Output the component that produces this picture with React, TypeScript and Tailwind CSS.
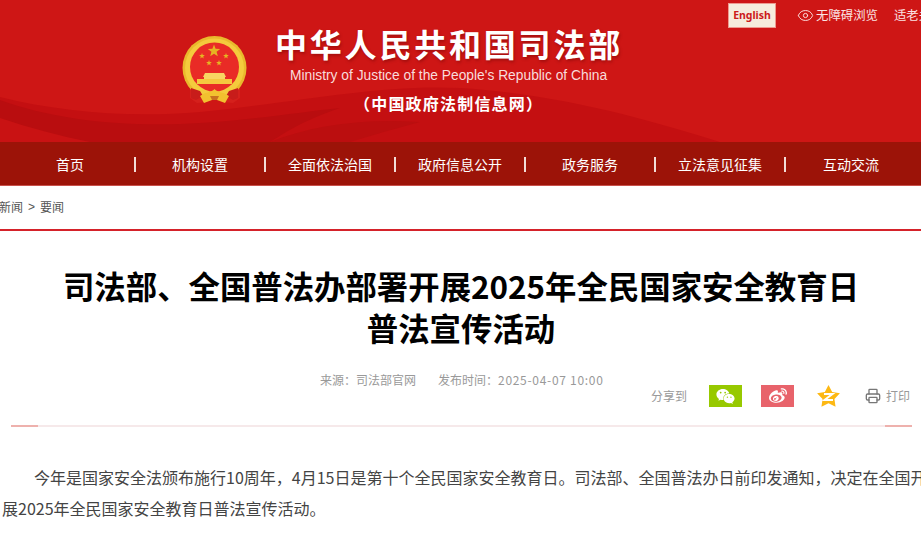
import React from "react";
import { Eye, Printer } from "lucide-react";
import { FaWeixin, FaWeibo } from "react-icons/fa";

const cjk = "font-['Noto_Sans_CJK_SC','Noto_Sans',sans-serif]";
const navItems = ["首页", "机构设置", "全面依法治国", "政府信息公开", "政务服务", "立法意见征集", "互动交流"];

function star(cx: number, cy: number, r: number, inner = 0.42) {
  const pts: string[] = [];
  for (let i = 0; i < 10; i++) {
    const rad = i % 2 === 0 ? r : r * inner;
    const a = (Math.PI / 5) * i - Math.PI / 2;
    pts.push(`${(cx + rad * Math.cos(a)).toFixed(2)},${(cy + rad * Math.sin(a)).toFixed(2)}`);
  }
  return pts.join(" ");
}

function Waves() {
  return (
    <svg className="absolute inset-0" width="921" height="142" viewBox="0 0 921 142">
      <path d="M0 97C60 112 130 118 200 112C300 102 380 84 460 88C560 94 650 120 720 142L0 142Z" fill="#c40f11" />
      <path d="M0 100C50 118 110 126 180 124C240 122 300 112 340 108C300 122 290 130 270 142L0 142Z" fill="#b90d0f" />
      <path d="M0 118C30 128 60 136 90 142L0 142Z" fill="#c91213" />
      <path d="M270 142C310 126 360 118 420 122C390 130 370 136 350 142Z" fill="#bb0e0f" />
    </svg>
  );
}

function Emblem() {
  return (
    <svg width="68" height="70" viewBox="0 0 68 70" className="shrink-0">
      <path d="M9 50L9 62L16 67L26 66L34 60L42 66L52 67L59 62L59 50Z" fill="#d5201c" />
      <circle cx="33.500" cy="32" r="32" fill="#e9b92c" />
      <circle cx="33.500" cy="32" r="29.500" fill="#f4cb3d" />
      <circle cx="33.500" cy="31" r="24.500" fill="#e92b26" />
      <polygon points={star(33, 15, 6.500)} fill="#e6b322" />
      <polygon points={star(21, 20, 3)} fill="#e6b322" />
      <polygon points={star(45, 20, 3)} fill="#e6b322" />
      <polygon points={star(28, 27, 3)} fill="#e6b322" />
      <polygon points={star(38, 27, 3)} fill="#e6b322" />
      <path d="M24 37L43 37L45 41L44 41L44 43L23 43L23 41L22 41Z" fill="#f8d662" />
      <rect x="16" y="43" width="35" height="5" fill="#f5c83f" />
      <path d="M10 52L19 55L22 60L15 64L10 62Z" fill="#c81c1a" />
      <path d="M57 52L48 55L45 60L52 64L57 62Z" fill="#c81c1a" />
      <path d="M19 60C26 55 30 57 33.500 53C37 57 41 55 48 60L44 67L36 64L31 64L23 67Z" fill="#f2c12f" />
      <path d="M29 60L38 60L36 64L31 64Z" fill="#c9701f" />
    </svg>
  );
}

function QzoneStar() {
  return (
    <svg width="23" height="22" viewBox="0 0 23 22" className="shrink-0">
      <polygon points={star(11.500, 12, 12, 0.52)} fill="#fdb813" />
      <path d="M7 9L15.500 9L7.500 15L16 15" fill="none" stroke="#fff" strokeWidth="2" />
    </svg>
  );
}

export default function App() {
  return (
    <div className={`w-[921px] h-[538px] overflow-hidden bg-white ${cjk}`}>
      <header className="relative h-[142px] bg-[#ce1615] overflow-hidden">
        <Waves />
        <div className="relative flex items-start pl-[181px]">
          <div className="mt-[36px]">
            <Emblem />
          </div>
          <div className="ml-[26px] w-[366px] shrink-0 flex flex-col items-start">
            <h1 className="mt-[20px] h-[46px] text-[32px] leading-[46px] font-bold tracking-[2.8px] text-white whitespace-nowrap [text-shadow:1px_2px_3px_rgba(90,0,0,0.35)]">
              中华人民共和国司法部
            </h1>
            <p className="mt-[1px] ml-[15px] text-[13.8px] leading-[18px] text-[#f9dcdc] font-['Liberation_Sans',sans-serif] whitespace-nowrap">
              Ministry of Justice of the People's Republic of China
            </p>
            <p className="mt-[6px] ml-[79px] text-[16px] leading-[24px] font-bold tracking-[1.2px] text-white whitespace-nowrap">
              （中国政府法制信息网）
            </p>
          </div>
          <div className="mt-[3px] ml-[87px] flex items-center shrink-0 text-[12.4px] text-[#fbe3e3] whitespace-nowrap">
            <a className="w-[48px] h-[25px] flex items-center justify-center bg-[#f6ecdc] text-[#cc1a1a] text-[10.5px] font-bold font-['Noto_Sans',sans-serif] border border-[#ee9a8f]">
              English
            </a>
            <Eye size={17} strokeWidth={1.4} className="ml-[21px] text-[#fbdcdc]" />
            <span className="ml-[2px]">无障碍浏览</span>
            <span className="ml-[16px]">适老关怀</span>
          </div>
        </div>
      </header>

      <nav className="flex h-[44px] pl-[6px] pt-[1px] bg-[#9c1308] border-b border-[#c9504a] text-[14px] text-white">
        {navItems.map((item, i) => (
          <div key={item} className="w-[130px] shrink-0 flex items-center">
            <span className="flex-1 text-center whitespace-nowrap">{item}</span>
            {i < navItems.length - 1 && <span className="w-[2px] h-[15px] bg-[#f3dcd8]" />}
          </div>
        ))}
      </nav>

      <div className="h-[41px] pb-[2px] flex items-center -ml-[1px] text-[12px] text-[#555] border-b-2 border-[#d5222a] box-content">
        <span>新闻</span>
        <span className="mx-[5px] font-['Liberation_Sans',sans-serif]">&gt;</span>
        <span>要闻</span>
      </div>

      <main>
        <h2 className="mt-[34px] ml-[1px] text-center text-[31.4px] leading-[42px] font-bold text-black">
          司法部、全国普法办部署开展2025年全民国家安全教育日
          <br />
          普法宣传活动
        </h2>
        <div className="mt-[26px] flex h-[10px] items-center pl-[320px] text-[12px] text-[#999] whitespace-nowrap">
          <span>来源：司法部官网</span>
          <span className="ml-[22px]">发布时间：</span>
          <span className="tracking-[0.7px]">2025-04-07 10:00</span>
        </div>
        <div className="flex items-center h-[22px] pl-[651px] text-[12px] text-[#999] whitespace-nowrap">
          <span className="w-[58px]">分享到</span>
          <a className="w-[33px] h-[22px] flex items-center justify-center bg-[#97c900] text-white">
            <FaWeixin size={19} />
          </a>
          <a className="ml-[19px] w-[33px] h-[22px] flex items-center justify-center bg-[#e8636b] text-white">
            <FaWeibo size={18} />
          </a>
          <span className="ml-[23px]">
            <QzoneStar />
          </span>
          <Printer size={16} strokeWidth={2} className="ml-[25px] text-[#777]" />
          <span className="ml-[5px]">打印</span>
        </div>
        <div className="mt-[18px] ml-[11px] mr-[9px] h-[2px] flex justify-between bg-[#f6e9ea]">
          <span className="w-[27px] bg-[#eeb1ad]" />
          <span className="w-[27px] bg-[#eeb1ad]" />
        </div>
        <article className="mt-[35px] ml-[2px] w-[1200px] text-[16px] leading-[31px] text-[#444]">
          <p className="indent-[32px] whitespace-nowrap">
            今年是国家安全法颁布施行10周年，4月15日是第十个全民国家安全教育日。司法部、全国普法办日前印发通知，决定在全国开
          </p>
          <p>展2025年全民国家安全教育日普法宣传活动。</p>
        </article>
      </main>
    </div>
  );
}
